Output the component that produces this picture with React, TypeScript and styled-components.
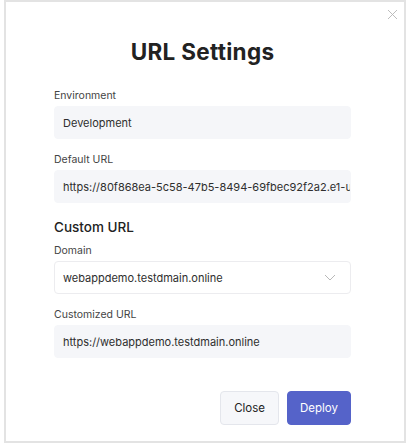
import React from "react";
import styled, { createGlobalStyle } from "styled-components";

const Global = createGlobalStyle`
  html, body { margin: 0; padding: 0; background: #ffffff; }
  body { font-family: Inter, "Noto Sans", sans-serif; color: #2b2b2b; }
  * { box-sizing: border-box; }
`;

const Frame = styled.div`
  position: relative;
  width: 402px;
  height: 443px;
  margin: 0 0 0 4px;
  border: 2px solid #e3e3e3;
  background: #fff;
  display: flex;
  flex-direction: column;
  align-items: flex-start;
  padding: 35px 0 0 48px;
`;

const CloseX = styled.button`
  position: absolute;
  top: 7px;
  right: 5px;
  width: 12px;
  height: 12px;
  padding: 0;
  border: 0;
  background: none;
  display: flex;
  color: #b5b5b5;
`;

const Title = styled.h1`
  width: 297px;
  margin: 0 0 21px 0;
  text-align: center;
  font-size: 22.5px;
  line-height: 30px;
  font-weight: 700;
  color: #222;
  letter-spacing: 0.3px;
`;

const Form = styled.div`
  width: 297px;
  display: flex;
  flex-direction: column;
`;

const Field = styled.div<{ $gap?: number }>`
  display: flex;
  flex-direction: column;
  gap: 2px;
  margin-bottom: ${(p) => p.$gap ?? 13}px;
`;

const Label = styled.label`
  font-size: 10.5px;
  line-height: 16px;
  color: #444;
`;

const Heading = styled.div`
  font-size: 13.5px;
  line-height: 18px;
  font-weight: 500;
  color: #222;
  margin: 2px 0 7px;
`;

const InputBox = styled.div<{ $outlined?: boolean }>`
  height: 33px;
  border-radius: 4px;
  background: ${(p) => (p.$outlined ? "#fff" : "#f5f6f9")};
  border: 1px solid ${(p) => (p.$outlined ? "#ececef" : "#f5f6f9")};
  display: flex;
  align-items: center;
  padding: 0 0 0 8px;
  font-size: 11px;
  color: #2e2e2e;
  white-space: nowrap;
  overflow: hidden;
`;

const Value = styled.span`
  flex: 1;
  overflow: hidden;
`;

const Chevron = styled.span`
  width: 24px;
  margin-right: 8px;
  display: flex;
  justify-content: center;
  color: #b8b8b8;
`;

const Actions = styled.div`
  width: 297px;
  display: flex;
  justify-content: flex-end;
  gap: 8px;
  margin-top: 33px;
`;

const Button = styled.button<{ $primary?: boolean }>`
  height: 34px;
  padding: 0 ${(p) => (p.$primary ? 12 : 13)}px;
  border-radius: 4px;
  font-family: inherit;
  font-size: 11.5px;
  border: 1px solid ${(p) => (p.$primary ? "#5563c9" : "#e4e6ec")};
  background: ${(p) => (p.$primary ? "#5563c9" : "#f6f7fa")};
  color: ${(p) => (p.$primary ? "#fff" : "#222")};
`;

export default function App() {
  return (
    <>
      <Global />
      <Frame>
        <CloseX aria-label="close">
          <svg width="11" height="11" viewBox="0 0 11 11" fill="none" stroke="currentColor" strokeWidth="0.9">
            <path d="M1 1 L10 10 M10 1 L1 10" />
          </svg>
        </CloseX>
        <Title>URL Settings</Title>
        <Form>
          <Field>
            <Label>Environment</Label>
            <InputBox>
              <Value>Development</Value>
            </InputBox>
          </Field>
          <Field>
            <Label>Default URL</Label>
            <InputBox>
              <Value>https://80f868ea-5c58-47b5-8494-69fbec92f2a2.e1-us-east-azure.choreoapps.dev</Value>
            </InputBox>
          </Field>
          <Heading>Custom URL</Heading>
          <Field $gap={13}>
            <Label>Domain</Label>
            <InputBox $outlined>
              <Value>webappdemo.testdmain.online</Value>
              <Chevron>
                <svg width="12" height="7" viewBox="0 0 12 7" fill="none" stroke="currentColor" strokeWidth="1">
                  <path d="M1 1 L6 6 L11 1" />
                </svg>
              </Chevron>
            </InputBox>
          </Field>
          <Field $gap={0}>
            <Label>Customized URL</Label>
            <InputBox>
              <Value>https://webappdemo.testdmain.online</Value>
            </InputBox>
          </Field>
        </Form>
        <Actions>
          <Button>Close</Button>
          <Button $primary>Deploy</Button>
        </Actions>
      </Frame>
    </>
  );
}
